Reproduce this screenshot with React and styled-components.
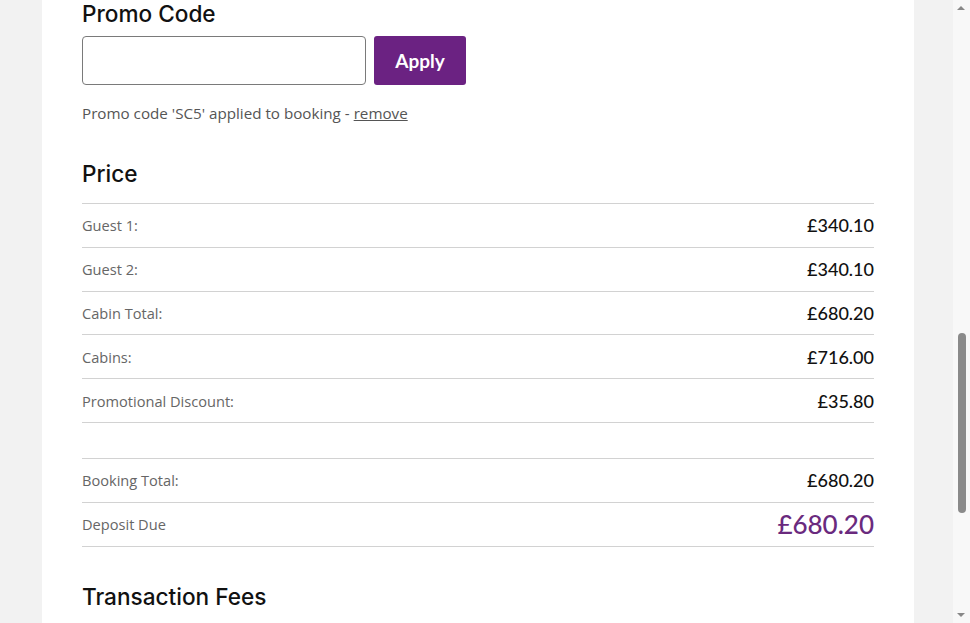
import React from 'react'
import styled, { createGlobalStyle } from 'styled-components'

const GlobalStyle = createGlobalStyle`
  html, body {
    margin: 0;
    padding: 0;
    overflow: hidden;
  }
  body {
    font-family: "Open Sans", "Noto Sans", Arial, sans-serif;
    color: #111;
  }
`

const Screen = styled.div`
  width: 970px;
  height: 623px;
  display: flex;
  overflow: hidden;
  background: #f2f2f2;
`

const Main = styled.div`
  flex: 1;
  padding-left: 42px;
  display: flex;
`

const Panel = styled.div`
  width: 872px;
  box-sizing: border-box;
  background: #fff;
  padding: 1px 40px 0;
`

const Heading = styled.h2`
  margin: ${p => p.$top || 0}px 0 0;
  font-family: Inter, "Open Sans", sans-serif;
  font-size: 22.6px;
  line-height: ${p => p.$lh || 28}px;
  font-weight: 500;
  color: #111;
`

const PromoRow = styled.div`
  display: flex;
  gap: 8px;
  margin-top: 9px;
`

const Input = styled.input`
  width: 284px;
  height: 49px;
  box-sizing: border-box;
  border: 1px solid #7a7a7a;
  border-radius: 4px;
  padding: 0 12px;
  font: inherit;
  font-size: 16px;
`

const ApplyButton = styled.button`
  width: 92px;
  height: 49px;
  border: none;
  border-radius: 3px;
  background: #6b2282;
  color: #fff;
  font-family: Lato, sans-serif;
  font-size: 19px;
  font-weight: 700;
  cursor: pointer;
`

const Note = styled.p`
  margin: 18px 0 0;
  font-size: 15.2px;
  line-height: 20px;
  color: #555;

  a {
    color: #555;
    text-decoration: underline;
  }
`

const Table = styled.div`
  margin-top: ${p => p.$top}px;
  border-top: 1px solid #d2d2d2;
`

const Row = styled.div`
  height: 42.8px;
  display: flex;
  align-items: center;
  justify-content: space-between;
  border-bottom: 1px solid #d2d2d2;
`

const Label = styled.span`
  font-size: 14.6px;
  color: #666;
`

const Value = styled.span`
  font-family: Lato, sans-serif;
  font-size: ${p => (p.$big ? 26 : 18)}px;
  color: ${p => (p.$big ? '#6a2a7e' : '#111')};
  font-weight: 500;
`

const Scrollbar = styled.div`
  width: 17px;
  background: #f8f8f8;
  position: relative;
`

const Arrow = styled.div`
  position: absolute;
  left: 4px;
  ${p => (p.$down ? 'bottom: 6px;' : 'top: 6px;')}
  width: 0;
  height: 0;
  border-left: 4px solid transparent;
  border-right: 4px solid transparent;
  ${p => (p.$down ? 'border-top: 4px solid #888;' : 'border-bottom: 4px solid #888;')}
`

const Thumb = styled.div`
  position: absolute;
  left: 5px;
  top: 333px;
  width: 8px;
  height: 180px;
  border-radius: 4px;
  background: #8a8a8a;
`

const priceRows = [
  ['Guest 1:', '£340.10'],
  ['Guest 2:', '£340.10'],
  ['Cabin Total:', '£680.20'],
  ['Cabins:', '£716.00'],
  ['Promotional Discount:', '£35.80'],
]

const App = () => {
  return (
    <Screen>
      <GlobalStyle />
      <Main>
        <Panel>
          <Heading $lh={26}>Promo Code</Heading>
          <PromoRow>
            <Input type="text" />
            <ApplyButton>Apply</ApplyButton>
          </PromoRow>
          <Note>
            Promo code 'SC5' applied to booking - <a href="#">remove</a>
          </Note>

          <Heading $top={37}>Price</Heading>
          <Table $top={15}>
            {priceRows.map(([label, value]) => (
              <Row key={label}>
                <Label>{label}</Label>
                <Value>{value}</Value>
              </Row>
            ))}
          </Table>

          <Table $top={35}>
            <Row>
              <Label>Booking Total:</Label>
              <Value>£680.20</Value>
            </Row>
            <Row>
              <Label>Deposit Due</Label>
              <Value $big>£680.20</Value>
            </Row>
          </Table>

          <Heading $top={36}>Transaction Fees</Heading>
        </Panel>
      </Main>
      <Scrollbar>
        <Arrow />
        <Thumb />
        <Arrow $down />
      </Scrollbar>
    </Screen>
  )
}

export default App
